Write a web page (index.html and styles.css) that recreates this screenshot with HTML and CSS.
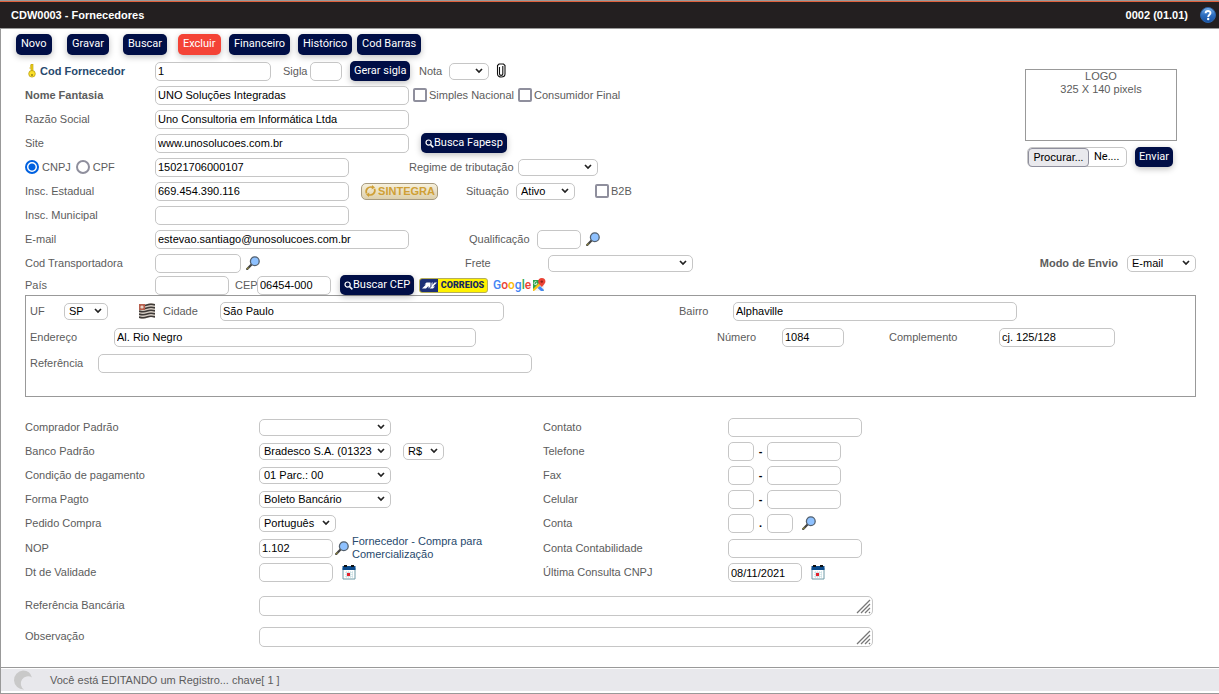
FILE: index.html
```html
<!DOCTYPE html>
<html lang="pt-BR">
<head>
<meta charset="utf-8">
<meta name="viewport" content="width=device-width, initial-scale=1">
<title>CDW0003 - Fornecedores</title>
<link rel="stylesheet" href="styles.css">
</head>
<body>
<svg class="defs" aria-hidden="true">
  <symbol id="lens" viewBox="0 0 14 14">
    <path d="M1.2 13 6 8" stroke="#444" stroke-width="2.2" stroke-linecap="square"/>
    <path d="M1 13l1.6-1.6" stroke="#8a8340" stroke-width="1.4"/>
    <circle cx="8.8" cy="5.2" r="4.4" fill="#8ec1ff" stroke="#53606e" stroke-width="1.3"/>
  </symbol>
  <symbol id="lens-white" viewBox="0 0 9 9">
    <circle cx="3.6" cy="3.6" r="2.6" fill="none" stroke="#fff" stroke-width="1.2"/>
    <path d="M5.6 5.6 8.4 8.4" stroke="#fff" stroke-width="1.5"/>
  </symbol>
  <symbol id="calendar" viewBox="0 0 14 15">
    <path d="M1 3h12v11H1z" fill="#fff" stroke="#6f9aa6"/>
    <path d="M.5 1h13v4H.5z" fill="#0a4a8c"/>
    <path d="M2 0h3v2H2zM9 0h3v2H9z" fill="#111"/>
    <path d="M3 7.500h8M3 9.500h8M3 11.500h8M4.500 6v7M6.500 6v7M8.500 6v7M10.500 6v7" stroke="#c3dce0" stroke-width=".6"/>
    <path d="M5 8h3v3H5z" fill="#e3202b"/>
  </symbol>
</svg>

<div class="page">
  <header class="topbar">
    <h1 class="title">CDW0003 - Fornecedores</h1>
    <span class="version">0002 (01.01)</span>
    <button type="button" class="icon-btn" aria-label="Ajuda">
      <svg width="16" height="16" viewBox="0 0 16 16">
        <defs><linearGradient id="hg" x1="0" y1="0" x2="0" y2="1"><stop offset="0" stop-color="#7db4ea"/><stop offset=".5" stop-color="#2f6fc0"/><stop offset="1" stop-color="#164f9f"/></linearGradient></defs>
        <circle cx="8" cy="8" r="7.500" fill="url(#hg)" stroke="#2b62a8"/>
        <path d="M5.600 6.300C5.600 3.200 10.500 3.200 10.500 6.100 10.500 7.800 8.200 7.900 8.200 10" fill="none" stroke="#fff" stroke-width="1.900"/>
        <circle cx="8.200" cy="12" r="1.200" fill="#fff"/>
      </svg>
    </button>
  </header>

  <form class="form">
    <nav class="toolbar">
      <button type="button" class="btn">Novo</button>
      <button type="button" class="btn">Gravar</button>
      <button type="button" class="btn">Buscar</button>
      <button type="button" class="btn danger">Excluir</button>
      <button type="button" class="btn">Financeiro</button>
      <button type="button" class="btn">Histórico</button>
      <button type="button" class="btn">Cod Barras</button>
    </nav>

    <div class="main">
      <div class="fields">
        <div class="row r-code">
          <label class="key" for="cod"><svg width="13" height="14" viewBox="0 0 13 14"><path d="M6 0h2v7h-2z" fill="#f3d31b" stroke="#b39708" stroke-width=".6"/><path d="M5 2h1M4.500 4h1.500" stroke="#c9a80c"/><circle cx="7" cy="9.800" r="3.300" fill="#fbe02b" stroke="#b39708" stroke-width=".7"/><circle cx="7" cy="11" r=".9" fill="#8f7a12"/></svg>Cod Fornecedor</label>
          <input id="cod" class="w116" value="1">
          <label for="sigla">Sigla</label>
          <input id="sigla" class="w32">
          <button type="button" class="btn">Gerar sigla</button>
          <label for="nota">Nota</label>
          <select id="nota" class="w40"><option></option></select>
          <button type="button" class="icon-btn" aria-label="Anexar">
            <svg width="12" height="16" viewBox="0 0 12 16"><path d="M2.500 11V2.500L4 1h4.500L10 2.500V11c0 4-7.500 4-7.500 0M4.500 4v7c0 1.800 3.300 1.800 3.300 0V3" fill="none" stroke="#111" stroke-width="1.100"/></svg>
          </button>
        </div>
        <div class="row r-name">
          <label class="strong" for="nome">Nome Fantasia</label>
          <input id="nome" class="w254" value="UNO Soluções Integradas">
          <label class="check"><input type="checkbox">Simples Nacional</label>
          <label class="check"><input type="checkbox">Consumidor Final</label>
        </div>
        <div class="row r-name">
          <label for="razao">Razão Social</label>
          <input id="razao" class="w254" value="Uno Consultoria em Informática Ltda">
        </div>
        <div class="row r-site">
          <label for="site">Site</label>
          <input id="site" class="w254" value="www.unosolucoes.com.br">
          <button type="button" class="btn"><svg width="9" height="9"><use href="#lens-white"/></svg>Busca Fapesp</button>
        </div>
        <div class="row r-doc">
          <div class="radios">
            <label class="check"><input type="radio" name="doc" checked>CNPJ</label>
            <label class="check"><input type="radio" name="doc">CPF</label>
          </div>
          <input class="w194" aria-label="Número do documento" value="15021706000107">
          <label for="regime">Regime de tributação</label>
          <select id="regime" class="w80"><option></option></select>
        </div>
        <div class="row r-state">
          <label for="ie">Insc. Estadual</label>
          <input id="ie" class="w194" value="669.454.390.116">
          <button type="button" class="sintegra"><svg width="13" height="12" viewBox="0 0 13 12"><path d="M2.500 8.500C1 4.500 4.500 1 8.500 2.300M10.500 3.800C12 7.500 8.500 11 4.500 9.700" fill="none" stroke="#cf9f35" stroke-width="1.700"/><path d="M8 0l3 2.500-3.300 2zM5 12l-3-2.500 3.300-2z" fill="#cf9f35"/></svg>SINTEGRA</button>
          <label for="situacao">Situação</label>
          <select id="situacao" class="w59"><option>Ativo</option></select>
          <label class="check"><input type="checkbox">B2B</label>
        </div>
        <div class="row r-name">
          <label for="im">Insc. Municipal</label>
          <input id="im" class="w194">
        </div>
        <div class="row r-mail">
          <label for="email">E-mail</label>
          <input id="email" class="w254" value="estevao.santiago@unosolucoes.com.br">
          <label for="qualif">Qualificação</label>
          <input id="qualif" class="w44">
          <button type="button" class="icon-btn" aria-label="Pesquisar qualificação"><svg width="14" height="14"><use href="#lens"/></svg></button>
        </div>
        <div class="row r-carrier">
          <label for="transp">Cod Transportadora</label>
          <input id="transp" class="w86">
          <button type="button" class="icon-btn" aria-label="Pesquisar transportadora"><svg width="14" height="14"><use href="#lens"/></svg></button>
          <label for="frete">Frete</label>
          <select id="frete" class="w145"><option></option></select>
        </div>
        <div class="row r-country">
          <label for="pais">País</label>
          <input id="pais" class="w74">
          <label for="cep">CEP</label>
          <input id="cep" class="w74" value="06454-000">
          <button type="button" class="btn"><svg width="9" height="9"><use href="#lens-white"/></svg>Buscar CEP</button>
          <a class="correios" href="#"><span class="mark"><svg width="17" height="11" viewBox="0 0 17 11"><path d="M1 8.500 5 4.500H3.500L5.500 2.500H9.500V6.500L7.500 8.500V6L5 8.500zM16 2.500l-4 4h2l-2 2H8.500L10.500 6.500 10.500 3 11.500 2v3L13.500 2.500z" fill="#fff"/></svg></span><span class="word">CORREIOS</span></a>
          <a class="google" href="#"><span class="gb">G</span><span class="gr">o</span><span class="gy">o</span><span class="gb">g</span><span class="gg">l</span><span class="gr">e</span><svg width="14" height="14" viewBox="0 0 14 14"><path d="M1 2h11v11H1z" fill="#2ba24c"/><path d="M1 12 10 3l2 2v7l-1 1H1z" fill="#f1f3f4"/><path d="M1 11 9 3l2 2-9 8H1z" fill="#fbc116"/><path d="M8 8l4 4-1 1H9L5.500 10z" fill="#4285f4"/><path d="M9.800 0a3.600 3.600 0 0 1 3.600 3.600C13.400 6 9.800 9 9.800 9S6.200 6 6.200 3.600A3.600 3.600 0 0 1 9.800 0z" fill="#ea4335"/><circle cx="9.800" cy="3.600" r="1.200" fill="#8e1f16"/><path d="M5 5.500A1.500 1.500 0 1 1 4.500 4M3.800 5.500H5" stroke="#fff" stroke-width=".8" fill="none"/></svg></a>
        </div>
      </div>

      <aside class="side">
        <div class="logo-area">
          <div class="logo-box">LOGO<br>325 X 140 pixels</div>
          <div class="upload">
            <label class="file"><input type="file" class="file-input"><span class="file-btn">Procurar...</span><span class="file-name">Ne....</span></label>
            <button type="button" class="btn">Enviar</button>
          </div>
        </div>
        <div class="send">
          <label class="strong" for="modo">Modo de Envio</label>
          <select id="modo" class="w69"><option>E-mail</option></select>
        </div>
      </aside>
    </div>

    <section class="address">
      <div class="row a-city">
        <label for="uf">UF</label>
        <select id="uf" class="w44"><option>SP</option></select>
        <svg width="16" height="16" viewBox="0 0 16 16"><path d="M0 1q4 2 8 0t8 0v14q-4-2-8 0t-8 0z" fill="#d6cdc4"/><path d="M0 2q4 1.500 8 0t8 0M0 5q4 1.500 8 0t8 0M0 8q4 1.500 8 0t8 0M0 11q4 1.500 8 0t8 0M0 14q4 1.500 8 0t8 0" fill="none" stroke="#3e3a38" stroke-width="1.700"/><path d="M0 1h6v6H0z" fill="#b8604e"/><circle cx="3" cy="4" r="1.600" fill="#e9d5cb"/></svg>
        <label for="cidade">Cidade</label>
        <input id="cidade" class="w284" value="São Paulo">
        <label for="bairro">Bairro</label>
        <input id="bairro" class="w284" value="Alphaville">
      </div>
      <div class="row a-street">
        <label for="end">Endereço</label>
        <input id="end" class="w362" value="Al. Rio Negro">
        <label for="num">Número</label>
        <input id="num" class="w62" value="1084">
        <label for="compl">Complemento</label>
        <input id="compl" class="w116" value="cj. 125/128">
      </div>
      <div class="row a-ref">
        <label for="ref">Referência</label>
        <input id="ref" class="w434">
      </div>
    </section>

    <section class="lower">
      <div class="row two">
        <label for="comprador">Comprador Padrão</label>
        <div class="cell"><select id="comprador" class="w132"><option></option></select></div>
        <label for="contato">Contato</label>
        <div class="cell"><input id="contato" class="w134"></div>
      </div>
      <div class="row two">
        <label for="banco">Banco Padrão</label>
        <div class="cell wide"><select id="banco" class="w132"><option>Bradesco S.A. (01323</option></select><select class="w41" aria-label="Moeda"><option>R$</option></select></div>
        <label for="tel">Telefone</label>
        <div class="cell"><input class="w26" aria-label="DDD"><span class="sep">-</span><input id="tel" class="w74"></div>
      </div>
      <div class="row two">
        <label for="cond">Condição de pagamento</label>
        <div class="cell"><select id="cond" class="w132"><option>01 Parc.: 00</option></select></div>
        <label for="fax">Fax</label>
        <div class="cell"><input class="w26" aria-label="DDD fax"><span class="sep">-</span><input id="fax" class="w74"></div>
      </div>
      <div class="row two">
        <label for="forma">Forma Pagto</label>
        <div class="cell"><select id="forma" class="w132"><option>Boleto Bancário</option></select></div>
        <label for="cel">Celular</label>
        <div class="cell"><input class="w26" aria-label="DDD celular"><span class="sep">-</span><input id="cel" class="w74"></div>
      </div>
      <div class="row two">
        <label for="pedido">Pedido Compra</label>
        <div class="cell"><select id="pedido" class="w77"><option>Português</option></select></div>
        <label for="conta">Conta</label>
        <div class="cell"><input id="conta" class="w26"><span class="sep">.</span><input class="w26" aria-label="Subconta"><button type="button" class="icon-btn lead" aria-label="Pesquisar conta"><svg width="14" height="14"><use href="#lens"/></svg></button></div>
      </div>
      <div class="row two tall">
        <label for="nop">NOP</label>
        <div class="cell nop"><input id="nop" class="w74" value="1.102"><button type="button" class="icon-btn" aria-label="Pesquisar NOP"><svg width="14" height="14"><use href="#lens"/></svg></button><span class="nop-text">Fornecedor - Compra para Comercialização</span></div>
        <label for="contab">Conta Contabilidade</label>
        <div class="cell"><input id="contab" class="w134"></div>
      </div>
      <div class="row two tall">
        <label for="validade">Dt de Validade</label>
        <div class="cell"><input id="validade" class="w74"><button type="button" class="icon-btn lead" aria-label="Calendário"><svg width="14" height="15"><use href="#calendar"/></svg></button></div>
        <label for="consulta">Última Consulta CNPJ</label>
        <div class="cell"><input id="consulta" class="w74" value="08/11/2021"><button type="button" class="icon-btn lead" aria-label="Calendário"><svg width="14" height="15"><use href="#calendar"/></svg></button></div>
      </div>
      <div class="row two notes">
        <label for="refbanc">Referência Bancária</label>
        <textarea id="refbanc" rows="1"></textarea>
      </div>
      <div class="row two notes">
        <label for="obs">Observação</label>
        <textarea id="obs" rows="1"></textarea>
      </div>
    </section>
  </form>

  <footer class="status">
    <div class="status-bar">
      <svg width="20" height="20" viewBox="0 0 20 20"><path d="M10 .5A9.500 9.500 0 1 0 11 19.500 7 7 0 1 1 19 7.500 9.500 9.500 0 0 0 10 .5z" fill="#c9c9c9"/></svg>
      <span>Você está EDITANDO um Registro... chave[ 1 ]</span>
    </div>
  </footer>
</div>
</body>
</html>
```

FILE: styles.css
```css
* { box-sizing: border-box; }
body { margin: 0; background: #fff; color: #5c5c5c; font: 11px/13px "Liberation Sans", Arial, sans-serif; }
input, select, textarea, button { font: inherit; margin: 0; }
label { white-space: nowrap; }
svg { display: block; flex: none; }
.defs { position: absolute; width: 0; height: 0; }

.page { min-height: 100vh; display: flex; flex-direction: column; border-top: 1px solid #999; }
.topbar { display: flex; align-items: center; height: 28px; padding: 0 3px 0 11px; background: #231f20; color: #fff; border-top: 1px solid #e0603c; border-bottom: 1px solid #999; font-weight: bold; }
.title { margin: 0; font-size: 11px; flex: 1; }
.version { margin-right: 12px; }
.form { flex: 1; border-left: 1px solid #999; padding-right: 23px; }

.btn { display: inline-flex; align-items: center; justify-content: center; justify-self: start; height: 20px; padding: 0 4px; border: 0; border-radius: 5px; background: #000e46; color: #fff; font: 11px/14px Roboto, Tahoma, sans-serif; white-space: nowrap; box-shadow: 0 2px 6px rgba(0, 0, 0, .25); }
.danger { background: #f44336; }
.icon-btn { display: inline-flex; justify-self: start; padding: 0; border: 0; background: none; }

.toolbar { display: grid; grid-template-columns: 51px 56px 55px 51px 69px 59px auto; align-items: center; height: 30px; padding-left: 15px; }
.toolbar .btn { height: 21px; padding: 0 5px; }

.main { display: flex; justify-content: space-between; padding-left: 24px; }
.row { display: grid; align-items: center; height: 24px; justify-content: start; }
.r-code { grid-template-columns: 130px 128px 27px 40px 69px 30px 46px auto; }
.r-name { grid-template-columns: 130px 258px 105px auto; }
.r-site { grid-template-columns: 130px 266px auto; }
.r-doc { grid-template-columns: 130px 254px 109px auto; }
.r-state { grid-template-columns: 130px 206px 105px 50px 79px auto; }
.r-mail { grid-template-columns: 130px 314px 68px 49px auto; }
.r-carrier { grid-template-columns: 130px 91px 219px 83px auto; }
.r-country { grid-template-columns: 130px 80px 22px 83px 79px 74px auto; height: 20px; }

input, select, textarea { border: 1px solid #c6c6c6; border-radius: 5px; background-color: #fff; color: #000; outline: 0; }
input { height: 19px; padding: 0 2px; }
select { appearance: none; height: 17px; padding: 0 16px 0 4px; background-image: url("data:image/svg+xml,%3Csvg xmlns='http://www.w3.org/2000/svg' width='8' height='6'%3E%3Cpath d='M1 1l3 3 3-3' fill='none' stroke='%23222' stroke-width='1.700'/%3E%3C/svg%3E"); background-repeat: no-repeat; background-position: right 5px center; }
input[type="checkbox"], input[type="radio"] { appearance: none; width: 14px; height: 14px; padding: 0; border: 2px solid #8f8f9d; border-radius: 2px; flex: none; }
input[type="radio"] { border-radius: 50%; }
input[type="radio"]:checked { border-color: #0061e0; background: radial-gradient(circle, #0061e0 3px, #fff 4px); }
.check { display: flex; align-items: center; gap: 2px; }
.radios { display: flex; gap: 5px; }
.radios .check { gap: 3px; }
.strong, .key { font-weight: bold; }
.key { display: flex; align-items: center; gap: 2px; color: #27496d; }

.w26 { width: 26px; } .w32 { width: 32px; } .w40 { width: 40px; } .w41 { width: 41px; }
.w44 { width: 44px; } .w59 { width: 59px; } .w62 { width: 62px; } .w69 { width: 69px; }
.w74 { width: 74px; } .w77 { width: 77px; } .w80 { width: 80px; } .w86 { width: 86px; }
.w116 { width: 116px; } .w132 { width: 132px; } .w134 { width: 134px; } .w145 { width: 145px; }
.w194 { width: 194px; } .w254 { width: 254px; } .w284 { width: 284px; }
.w362 { width: 362px; } .w434 { width: 434px; }

.sintegra { display: flex; align-items: center; justify-content: center; justify-self: start; gap: 1px; width: 77px; height: 17px; padding: 0; border: 1px solid #a79b80; border-radius: 5px; background: linear-gradient(#f6f0dc, #ddd0ac); color: #cf9f35; font-weight: bold; }
.correios { display: flex; width: 69px; height: 15px; border: 1px solid #b5ae5c; border-radius: 3px; overflow: hidden; background: #fff200; color: #14285f; text-decoration: none; }
.mark { display: flex; align-items: center; justify-content: center; width: 18px; background: #1c2f75; }
.word { flex: 1; text-align: center; font: 900 9px/13px Roboto, sans-serif; }
.google { display: flex; align-items: center; gap: 0; text-decoration: none; font: 500 12px/14px Roboto, sans-serif; }
.google svg { margin-left: 1px; }
.gb { color: #4285f4; } .gr { color: #ea4335; } .gy { color: #fbbc05; } .gg { color: #34a853; }

.side { display: flex; flex-direction: column; justify-content: space-between; align-items: flex-end; padding: 10px 0 20px; }
.logo-area { width: 171px; }
.logo-box { width: 152px; height: 72px; border: 1px solid #999; text-align: center; }
.upload { display: flex; align-items: center; gap: 8px; margin: 6px 0 0 2px; }
.file { display: flex; align-items: center; width: 100px; height: 20px; border: 1px solid #c6c6c6; border-radius: 5px; color: #000; font: 11px/14px Roboto, Tahoma, sans-serif; }
.file-input { position: absolute; width: 1px; height: 1px; opacity: 0; }
.file-btn { width: 61px; height: 19px; line-height: 17px; text-align: center; border: 1px solid #8f8f9d; border-radius: 4px; background: #e9e9ed; }
.file-name { padding-left: 5px; }
.send { display: flex; align-items: center; gap: 9px; height: 24px; }

.address { margin-left: 24px; height: 102px; padding: 2px 4px; border: 1px solid #999; }
.address .row { height: 26px; }
.a-city { grid-template-columns: 34px 75px 24px 57px 459px 54px auto; }
.a-street { grid-template-columns: 84px 603px 65px 107px 110px auto; }
.a-ref { grid-template-columns: 68px auto; }

.lower { padding: 18px 0 0 24px; }
.two { grid-template-columns: 234px 284px 185px auto; }
.tall { height: 25px; }
.notes { height: 31px; grid-template-columns: 234px minmax(0, 614px); }
.tall + .notes { margin-top: 5px; }
.cell { display: flex; align-items: center; }
.wide { gap: 12px; }
.sep { width: 13px; text-align: center; color: #000; font-weight: bold; }
.lead { margin-left: 9px; }
.nop { gap: 2px; }
.nop-text { width: 150px; margin-left: 1px; color: #27496d; }
textarea { display: block; width: 100%; height: 20px; padding: 2px; resize: none; background: #fff url("data:image/svg+xml,%3Csvg xmlns='http://www.w3.org/2000/svg' width='15' height='15'%3E%3Cpath d='M1 14L14 1M5 14l9-9M9 14l5-5M13 14l1-1' stroke='%23777' stroke-width='1.300'/%3E%3C/svg%3E") no-repeat right 1px bottom 1px; }

.status { border: solid #999; border-width: 1px 0 1px 1px; padding: 1px 0 2px; }
.status-bar { display: flex; align-items: center; gap: 17px; height: 22px; padding-left: 12px; background: #e8e8ec; }
```
